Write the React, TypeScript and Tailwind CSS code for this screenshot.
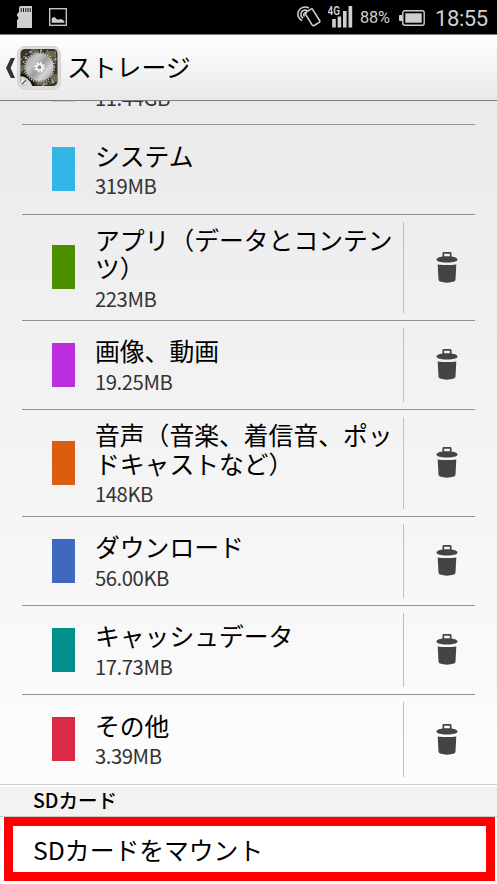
import React from "react";
import clsx from "clsx";

type Category = {
  name: string;
  size: string;
  swatch: string;
  height: string;
  deletable?: boolean;
};

const CATEGORIES: Category[] = [
  { name: "システム", size: "319MB", swatch: "bg-[#33b5e5]", height: "h-[90px]" },
  { name: "アプリ（データとコンテンツ）", size: "223MB", swatch: "bg-[#4b8f00]", height: "h-[106px]", deletable: true },
  { name: "画像、動画", size: "19.25MB", swatch: "bg-[#bb2ee0]", height: "h-[89px]", deletable: true },
  { name: "音声（音楽、着信音、ポッドキャストなど）", size: "148KB", swatch: "bg-[#d95e12]", height: "h-[107px]", deletable: true },
  { name: "ダウンロード", size: "56.00KB", swatch: "bg-[#4068bf]", height: "h-[89px]", deletable: true },
  { name: "キャッシュデータ", size: "17.73MB", swatch: "bg-[#008f8a]", height: "h-[89px]", deletable: true },
  { name: "その他", size: "3.39MB", swatch: "bg-[#d92b45]", height: "h-[89px]", deletable: true },
];

/* ─── Icons ─────────────────────────────────────────────────────────────────── */

function SdCardIcon() {
  return (
    <svg width="16" height="22" viewBox="0 0 16 22" fill="#cfcfcf">
      <path d="M3.5 0H14.5L15 .5V22H0V14L1.2 13V11L0 10V8L2 6V1.5Z" />
      <path d="M4.2 2v4M6.5 2v4M8.8 2v4M11 2v4M13.2 2v4" stroke="#000" strokeWidth=".9" />
    </svg>
  );
}

function PictureIcon() {
  return (
    <svg width="18" height="18" viewBox="0 0 18 18">
      <rect x=".7" y=".7" width="16.6" height="16.6" fill="none" stroke="#cfcfcf" strokeWidth="1.3" />
      <path d="M2.7 14.8v-4l1-1.3L5.5 9l2 2 1.5.8L11.5 11l2 .8 1.8 1.2v1.8Z" fill="#cfcfcf" />
    </svg>
  );
}

function NfcIcon() {
  return (
    <svg width="24" height="22" viewBox="0 0 24 22" fill="none" stroke="#cfcfcf" strokeWidth="1.6">
      <rect x="11.2" y="3.6" width="8.6" height="15.5" rx="1.3" transform="rotate(-32 15.5 11.3)" />
      <path d="M11.8 2.2C8.5-.2 3.2 1.3 1.5 5.3c-1.6 3.9.3 8.1 3.8 9.1" />
      <path d="M10.4 4.8C8.1 3.3 5.2 4.3 4.2 6.7c-.9 2.3.1 4.5 2 5.2" />
      <path d="M9.6 7.3c-1-.7-2.3-.3-2.7.7-.4 1 0 1.9.8 2.2" />
    </svg>
  );
}

function SignalIcon() {
  return (
    <svg width="25" height="24" viewBox="0 0 25 24" fill="#cfcfcf">
      <text x="-.5" y="11" fontSize="13" fontWeight="600" fontFamily="Roboto, sans-serif" textLength="12.5" lengthAdjust="spacingAndGlyphs">
        4G
      </text>
      <rect x="4.2" y="15" width="3.6" height="8.5" />
      <rect x="9.6" y="12.5" width="3.6" height="11" />
      <rect x="15" y="7" width="3.6" height="16.5" />
      <rect x="20.5" y="2" width="3.7" height="21.5" />
    </svg>
  );
}

function BatteryIcon() {
  return (
    <svg width="26" height="16" viewBox="0 0 26 16">
      <rect x="3.8" y=".8" width="21.4" height="14.4" rx="2" fill="none" stroke="#cfcfcf" strokeWidth="1.4" />
      <rect x="0" y="5" width="3.6" height="6" rx="1" fill="#cfcfcf" />
      <rect x="6.3" y="3.3" width="16.4" height="9.4" fill="#cfcfcf" />
    </svg>
  );
}

function TrashIcon() {
  return (
    <svg width="22" height="31" viewBox="0 0 22 31" fill="#444">
      <path d="M7.3 5V1.4Q7.3.9 7.8.9h6.4q.5 0 .5.5V5" fill="none" stroke="#444" strokeWidth="1.7" />
      <path d="M1 6.4C3 4.6 7 4.2 11 4.2s8 .4 10 2.2q.9.9.2 2C19.5 9.9 15 10.5 11 10.5S2.5 9.9.8 8.4Q.1 7.3 1 6.4Z" />
      <path d="M1.7 12.4Q11 13.5 20.3 12.4L19.5 27.4q-.1 1.6-1.5 2.2Q14.5 30.7 11 30.7T4 29.6Q2.6 29 2.5 27.4Z" />
    </svg>
  );
}

function SettingsAppIcon() {
  return (
    <svg width="44" height="44" viewBox="0 0 44 44">
      <defs>
        <linearGradient id="disc" x1="0" y1="0.1" x2="1" y2=".9">
          <stop offset="0" stopColor="#a2a2a2" />
          <stop offset=".3" stopColor="#c6c6c6" />
          <stop offset=".5" stopColor="#9c9c9c" />
          <stop offset=".72" stopColor="#d4d4d4" />
          <stop offset="1" stopColor="#979797" />
        </linearGradient>
        <clipPath id="face">
          <rect x="3.5" y="3" width="37" height="37" rx="4.5" />
        </clipPath>
      </defs>
      <rect x=".5" y=".5" width="43" height="43" rx="7.5" fill="#dcdcdc" stroke="#d2d2d2" />
      <g clipPath="url(#face)">
        <rect x="3" y="3" width="38" height="38" fill="#38332a" />
        <path d="M14 3h7v5h-7zM29 5h10v6H29zM34 28h6v8h-6zM20 35h11v4H20zM4 19h5v5H4z" fill="#6b634a" />
        <path d="M4 14l7-8M4 24l6 4M30 4l9 12M25 40l12-8M33 38l5-7M38 6v12" stroke="#958b6c" strokeWidth="1.2" strokeDasharray="2 1.5" />
        <g fill="#a8a598">
          <circle cx="9" cy="12" r="1.4" />
          <circle cx="6.5" cy="16" r="1.1" />
          <circle cx="13.5" cy="6" r="1.3" />
          <circle cx="24" cy="4.5" r="1.2" />
          <circle cx="38.5" cy="13" r="1.2" />
          <circle cx="36" cy="36" r="1.4" />
          <circle cx="27" cy="38.3" r="1.1" />
        </g>
        <path d="M3 29C11 29 15 35 16 41H3Z" fill="#dedede" />
        <path d="M3 29C11 29 15 35 17 41" fill="none" stroke="#15130f" strokeWidth="2.5" />
      </g>
      <circle cx="22.5" cy="21.2" r="14.6" fill="none" stroke="#b8b8b8" strokeWidth="1.8" strokeDasharray="1.35 1.2" />
      <circle cx="22.5" cy="21.2" r="13.9" fill="url(#disc)" />
      <circle cx="22.5" cy="21.2" r="4.3" fill="none" stroke="#fafafa" strokeWidth="2" strokeDasharray="1.7 1.677" />
      <circle cx="22.5" cy="21.2" r="2.8" fill="#8c8c8c" stroke="#fafafa" strokeWidth="1.6" />
      <circle cx="7" cy="36" r="3.3" fill="#f2f2f2" stroke="#aaa" strokeWidth=".6" />
      <path d="M5.2 38l3.8-4" stroke="#555" strokeWidth="1.2" />
    </svg>
  );
}

/* ─── Bars ──────────────────────────────────────────────────────────────────── */

function StatusBar() {
  return (
    <div className="flex h-[34px] shrink-0 items-center bg-black pl-[17px] pr-[10px] font-[Roboto,sans-serif] text-[#cfcfcf]">
      <SdCardIcon />
      <div className="ml-4">
        <PictureIcon />
      </div>
      <span className="flex-1" />
      <NfcIcon />
      <div className="-mt-[3px] ml-[7px]">
        <SignalIcon />
      </div>
      <span className="ml-[7px] w-[31px] whitespace-nowrap pt-[3px] text-[16.3px] leading-none tracking-[-0.2px]">88%</span>
      <div className="ml-[8px] mt-px">
        <BatteryIcon />
      </div>
      <span className="ml-[10px] w-[52px] whitespace-nowrap pt-[3px] text-[22px] leading-none tracking-[-0.4px]">18:55</span>
    </div>
  );
}

function ActionBar() {
  return (
    <div className="flex h-[67px] shrink-0 items-center border-y border-[#7e7e7e] bg-linear-to-b from-white to-[#e9e9e9] pl-[6px]">
      <svg width="9" height="20" viewBox="0 0 9 20" fill="#333">
        <path d="M4.8 0H9L4.6 10 9 20H4.8L0 10Z" />
      </svg>
      <div className="ml-[2px]">
        <SettingsAppIcon />
      </div>
      <h1 className="mb-[2px] ml-[6px] text-[24.8px] leading-none">ストレージ</h1>
    </div>
  );
}

function CategoryRow({ name, size, swatch, height, deletable }: Category) {
  return (
    <li className={clsx("flex items-center border-b border-[#929292] pl-[30px]", height)}>
      <div className={clsx("mb-px h-[44px] w-[23px] shrink-0", swatch)} />
      <div className="ml-[20px] w-[307px] shrink-0 pt-[2px]">
        <p className="text-[24.8px] leading-[28.5px]">{name}</p>
        <p className="pt-px text-[20.3px] leading-[30px] tracking-[-0.45px] text-[#333]">{size}</p>
      </div>
      {deletable && (
        <div className="my-[7px] ml-px flex flex-1 items-center justify-center self-stretch border-l border-[#bfbfbf] pb-px pl-[15px]">
          <TrashIcon />
        </div>
      )}
    </li>
  );
}

export default function App() {
  return (
    <div className="flex h-[884px] w-[497px] flex-col overflow-hidden bg-linear-to-b from-[#e8e8e8] to-white font-['Noto_Sans_CJK_JP',sans-serif] text-black">
      <StatusBar />
      <ActionBar />

      <ul className="px-[22px]">
        {/* Row scrolled mostly under the action bar */}
        <li className="flex h-[24px] items-start overflow-hidden border-b border-[#929292] pl-[30px]">
          <div className="h-px w-[23px] bg-[#cccccc]" />
          <p className="-mt-[18px] ml-[20px] text-[20.3px] leading-[29px] tracking-[-0.45px] text-[#333]">11.44GB</p>
        </li>
        {CATEGORIES.slice(0, -1).map((c) => (
          <CategoryRow key={c.name} {...c} />
        ))}
      </ul>
      <ul className="px-[22px] [&>li]:border-b-0">
        <CategoryRow {...CATEGORIES[CATEGORIES.length - 1]} />
      </ul>

      <h2 className="flex h-[33px] shrink-0 items-center border-y border-[#cbcbcb] bg-[#f2f2f2] pb-[2px] pl-[33px] text-[19.5px] font-medium leading-none shadow-[inset_0_2px_0_#fff]">
        SDカード
      </h2>
      <div className="ml-1 mr-[2px] flex h-[64px] shrink-0 items-center border-[9px] border-[#ff0000] bg-white pl-5 text-[24.8px] leading-none">
        SDカードをマウント
      </div>
    </div>
  );
}
